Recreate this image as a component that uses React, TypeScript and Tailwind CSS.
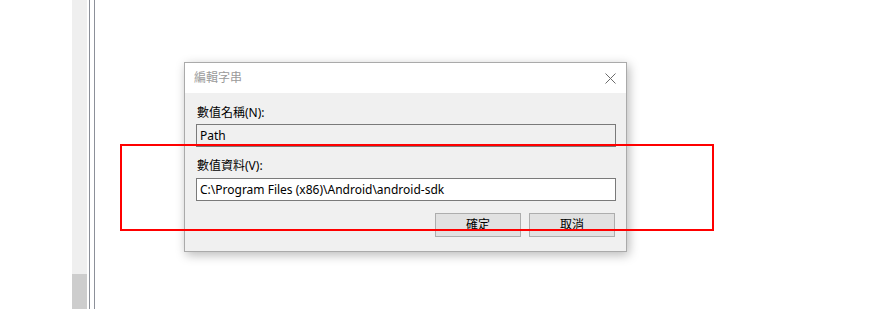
import React from 'react'

const font = { fontFamily: '"Noto Sans", "Noto Sans CJK TC", sans-serif' }

function CloseIcon() {
  return (
    <svg width="11" height="11" viewBox="0 0 11 11" className="block">
      <path d="M0.5 0.5 L10.5 10.5 M10.5 0.5 L0.5 10.5" stroke="#6b6b6b" strokeWidth="1" fill="none" />
    </svg>
  )
}

function EditStringDialog() {
  return (
    <div
      className="absolute left-[184px] top-[62px] w-[443px] h-[190px] border border-[#aaaaaa] bg-[#f0f0f0] shadow-[2px_3px_10px_rgba(0,0,0,0.28)] flex flex-col text-[12px] text-black"
      style={font}
    >
      {/* title bar */}
      <div className="h-[30px] bg-white flex items-center justify-between pl-[9px] pr-[10px]">
        <span className="text-[#9a9a9a] leading-none">編輯字串</span>
        <CloseIcon />
      </div>

      <div className="flex flex-col pl-[11px] pr-[10px]">
        <div className="h-[31px] flex items-end pb-[5px] pl-[1px] leading-none">數值名稱(N):</div>
        <div className="h-[23px] border border-[#7a7a7a] bg-[#f0f0f0] flex items-center pl-[3px] leading-none">Path</div>
        <div className="h-[31px] flex items-end pb-[6px] pl-[1px] leading-none">數值資料(V):</div>
        <div className="h-[23px] border border-[#7a7a7a] bg-white flex items-center pl-[3px] leading-none">
          C:\Program Files (x86)\Android\android-sdk
        </div>
        <div className="flex justify-end gap-[8px] mt-[12px] pr-[1px]">
          <div className="w-[86px] h-[24px] border border-[#adadad] bg-[#e1e1e1] flex items-center justify-center leading-none">確定</div>
          <div className="w-[86px] h-[24px] border border-[#adadad] bg-[#e1e1e1] flex items-center justify-center leading-none">取消</div>
        </div>
      </div>
    </div>
  )
}

export default function App() {
  return (
    <div className="relative w-[888px] h-[309px] bg-white overflow-hidden flex">
      {/* left scroll strip */}
      <div className="ml-[72px] w-[15px] h-full bg-[#efefef] flex flex-col justify-end">
        <div className="h-[35px] bg-[#cdcdcd]" />
      </div>
      <div className="ml-[2px] w-px h-full bg-[#8c9099]" />
      <div className="ml-[4px] w-px h-full bg-[#8c9099]" />

      <EditStringDialog />

      {/* red highlight */}
      <div className="absolute left-[120px] top-[144px] w-[594px] h-[87px] border-2 border-[#ff0000] pointer-events-none" />
    </div>
  )
}
